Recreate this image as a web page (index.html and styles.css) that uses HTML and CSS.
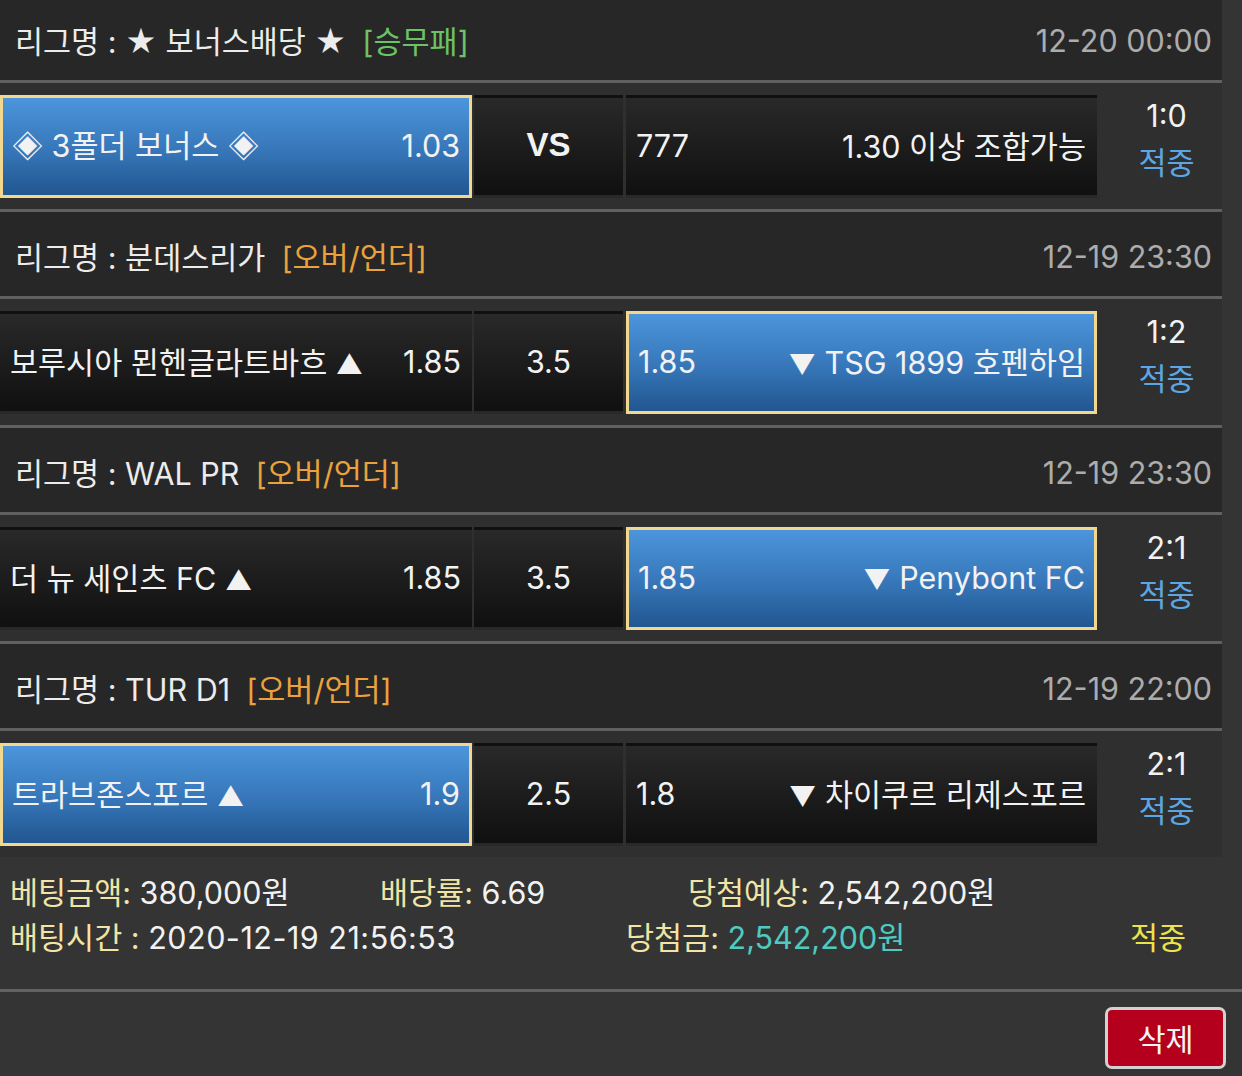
FILE: index.html
```html
<!DOCTYPE html>
<html lang="ko">
<head>
<meta charset="utf-8">
<title>배팅내역</title>
<link rel="stylesheet" href="styles.css">
</head>
<body>
<div class="board">
  <section class="game">
    <div class="league"><span class="name">리그명 : ★ 보너스배당 ★<span class="tag green">[승무패]</span></span><span class="time">12-20 00:00</span></div>
    <div class="match">
      <div class="cell side pick"><span>◈ 3폴더 보너스 ◈</span><span>1.03</span></div>
      <div class="cell mid vs">VS</div>
      <div class="cell side"><span>777</span><span>1.30 이상 조합가능</span></div>
      <div class="score"><span>1:0</span><span class="hit">적중</span></div>
    </div>
  </section>
  <section class="game">
    <div class="league"><span class="name">리그명 : 분데스리가<span class="tag orange">[오버/언더]</span></span><span class="time">12-19 23:30</span></div>
    <div class="match">
      <div class="cell side"><span>보루시아 묀헨글라트바흐 <i class="tri">▲</i></span><span>1.85</span></div>
      <div class="cell mid">3.5</div>
      <div class="cell side pick"><span><span>1.85</span></span><span><i class="tri">▼</i> TSG 1899 호펜하임</span></div>
      <div class="score"><span>1:2</span><span class="hit">적중</span></div>
    </div>
  </section>
  <section class="game">
    <div class="league"><span class="name">리그명 : WAL PR<span class="tag orange">[오버/언더]</span></span><span class="time">12-19 23:30</span></div>
    <div class="match">
      <div class="cell side"><span>더 뉴 세인츠 FC <i class="tri">▲</i></span><span>1.85</span></div>
      <div class="cell mid">3.5</div>
      <div class="cell side pick"><span>1.85</span><span><i class="tri">▼</i> Penybont FC</span></div>
      <div class="score"><span>2:1</span><span class="hit">적중</span></div>
    </div>
  </section>
  <section class="game">
    <div class="league"><span class="name">리그명 : TUR D1<span class="tag orange">[오버/언더]</span></span><span class="time">12-19 22:00</span></div>
    <div class="match">
      <div class="cell side pick"><span>트라브존스포르 <i class="tri">▲</i></span><span>1.9</span></div>
      <div class="cell mid">2.5</div>
      <div class="cell side"><span>1.8</span><span><i class="tri">▼</i> 차이쿠르 리제스포르</span></div>
      <div class="score"><span>2:1</span><span class="hit">적중</span></div>
    </div>
  </section>
</div>
<div class="summary">
  <div class="line line1">
    <span><b>베팅금액:</b> 380,000원</span>
    <span><b>배당률:</b> 6.69</span>
    <span><b>당첨예상:</b> 2,542,200원</span>
  </div>
  <div class="line line2">
    <span><b>배팅시간 :</b> <span class="wide">2020-12-19 21:56:53</span></span>
    <span><b>당첨금:</b> <em class="won">2,542,200원</em></span>
    <span class="result">적중</span>
  </div>
</div>
<div class="actions">
  <button class="delete" type="button">삭제</button>
</div>
</body>
</html>
```
FILE: styles.css
```css
html, body {
  margin: 0;
  padding: 0;
  background: #343434;
  overflow: hidden;
}
body {
  font-family: Inter, "Noto Sans CJK KR", sans-serif;
  font-size: 30.5px;
  color: #f2f2f2;
}
.board {
  width: 1222px;
  margin-top: -4px;
}
.league {
  height: 87px;
  box-sizing: border-box;
  padding: 4px 10px 0 15px;
  display: flex;
  align-items: center;
  justify-content: space-between;
  background: #272727;
  border-bottom: 3px solid #606060;
  color: #ececec;
}
.tag {
  margin-left: 16px;
}
.tag.green { color: #6cc264; }
.tag.orange { color: #eba23d; }
.time {
  color: #acacac;
}
.match {
  display: grid;
  grid-template-columns: 472px 149px 472px 1fr;
  column-gap: 2px;
  padding: 12px 0 11px;
  background: #2f2f2f;
  border-bottom: 3px solid #606060;
}
.game:last-child .match {
  border-bottom: none;
}
.cell {
  height: 103px;
  box-sizing: border-box;
  border: 3px solid transparent;
  background: linear-gradient(#292929, #101010);
  display: flex;
  align-items: center;
  padding-bottom: 3px;
}
.match .cell:nth-child(3) {
  margin-left: 1px;
}
.side {
  justify-content: space-between;
  padding-left: 7px;
  padding-right: 8px;
}
.pick {
  border-color: #f1d88e;
  background: linear-gradient(#4c95dc, #3676b8 55%, #215690);
  padding-left: 9px;
  padding-right: 9px;
}
.tri {
  font-style: normal;
  font-size: 27px;
}
.mid {
  justify-content: center;
}
.vs {
  font-family: "Liberation Sans", Arial, sans-serif;
  font-weight: bold;
  font-size: 33px;
}
.score {
  height: 103px;
  box-sizing: border-box;
  display: flex;
  flex-direction: column;
  align-items: center;
  justify-content: center;
  padding: 0 0 16px 12px;
  line-height: 47px;
}
.hit {
  color: #5ca6e4;
}
.summary {
  padding: 11px 0 31px 10px;
  border-bottom: 3px solid #626262;
}
.line {
  display: grid;
  height: 45px;
  align-items: center;
}
.line1 { grid-template-columns: 370px 308px auto; }
.line2 { grid-template-columns: 616px 504px auto; }
.line b {
  font-weight: normal;
  color: #f1e4a6;
}
.wide {
  letter-spacing: 0.5px;
}
.won {
  font-style: normal;
  color: #4fcac1;
}
.result {
  color: #ece24c;
}
.actions {
  display: flex;
  justify-content: flex-end;
  padding: 15px 16px 0 0;
}
.delete {
  width: 121px;
  height: 62px;
  border: 3px solid #d2d2d2;
  border-radius: 7px;
  background: #b4001c;
  color: #f4f4f4;
  font-family: Inter, "Noto Sans CJK KR", sans-serif;
  font-size: 30.5px;
  padding: 0;
}
```
